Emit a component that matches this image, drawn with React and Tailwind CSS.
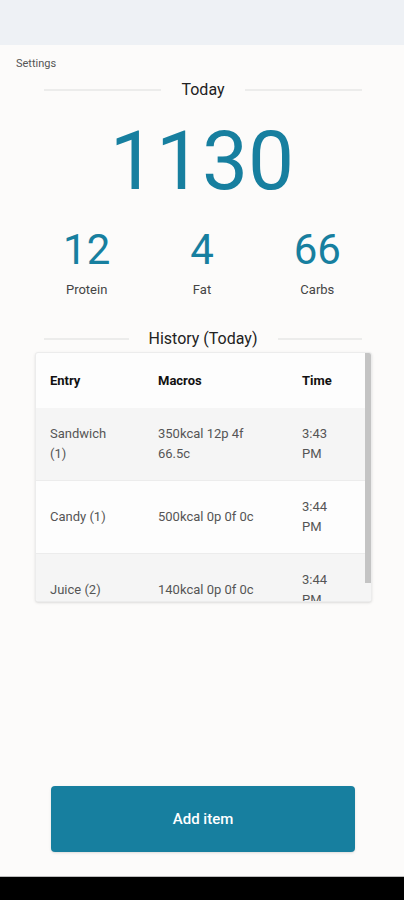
import React from "react";

const rows = [
  { entry: "Sandwich (1)", macros: "350kcal 12p 4f 66.5c", time: "3:43 PM", shade: true },
  { entry: "Candy (1)", macros: "500kcal 0p 0f 0c", time: "3:44 PM", shade: false },
  { entry: "Juice (2)", macros: "140kcal 0p 0f 0c", time: "3:44 PM", shade: true },
];

const Divider = ({ title, className }) => (
  <div className={`flex items-center gap-5 pl-[44px] pr-[42px] ${className}`}>
    <div className="h-[2px] flex-1 bg-[#ececeb]" />
    <span className="text-[16px] leading-6 text-[#222]">{title}</span>
    <div className="h-[2px] flex-1 bg-[#ececeb]" />
  </div>
);

const Macro = ({ value, label }) => (
  <div className="flex flex-col items-center">
    <span className="text-[42px] leading-none text-[#177f9f]">{value}</span>
    <span className="mt-[10px] text-[13px] leading-[18px] text-[#444]">{label}</span>
  </div>
);

const App = () => {
  return (
    <div className="flex h-[900px] flex-col bg-[#fcfbfa] font-['Roboto','Liberation_Sans',sans-serif]">
      <div className="h-[45px] bg-[#eef1f5]" />

      <div className="flex flex-1 flex-col">
        <div className="pl-4 pt-[11px] text-[11px] leading-4 text-[#555]">Settings</div>

        <Divider title="Today" className="mt-[6px]" />

        <div className="mt-[18px] text-center text-[82px] leading-none text-[#177f9f]">1130</div>

        <div className="mt-[27px] grid grid-cols-3 px-[29px]">
          <Macro value="12" label="Protein" />
          <Macro value="4" label="Fat" />
          <Macro value="66" label="Carbs" />
        </div>

        <Divider title="History (Today)" className="mt-[28px]" />

        <div className="relative ml-[35px] mr-[32px] mt-px h-[250px] overflow-hidden rounded-[3px] border border-[#ececec] bg-[#fdfdfd] shadow-sm">
          <div className="flex h-[55px] items-center pl-[14px] text-[13px] font-bold text-[#111]">
            <div className="w-[108px]">Entry</div>
            <div className="w-[144px]">Macros</div>
            <div>Time</div>
          </div>
          {rows.map((r) => (
            <div
              key={r.entry}
              className={`flex items-center border-b border-[#ececec] py-4 pl-[14px] text-[13px] leading-5 text-[#555] ${r.shade ? "bg-[#f5f5f5]" : "bg-[#fdfdfd]"}`}
            >
              <div className="w-[108px] pr-[40px]">{r.entry}</div>
              <div className="w-[144px] pr-[30px]">{r.macros}</div>
              <div className="w-[40px]">{r.time}</div>
            </div>
          ))}
          <div className="absolute right-0 top-0 h-[230px] w-[6px] bg-[#c4c4c4]" />
        </div>

        <div className="mt-auto pb-[24px] pl-[51px] pr-[49px]">
          <button className="flex h-[66px] w-full items-center justify-center rounded bg-[#177f9f] text-[15px] font-medium text-white shadow">
            Add item
          </button>
        </div>
      </div>

      <div className="h-px bg-[#bdbdbd]" />
      <div className="h-[23px] bg-black" />
    </div>
  );
};

export default App;
